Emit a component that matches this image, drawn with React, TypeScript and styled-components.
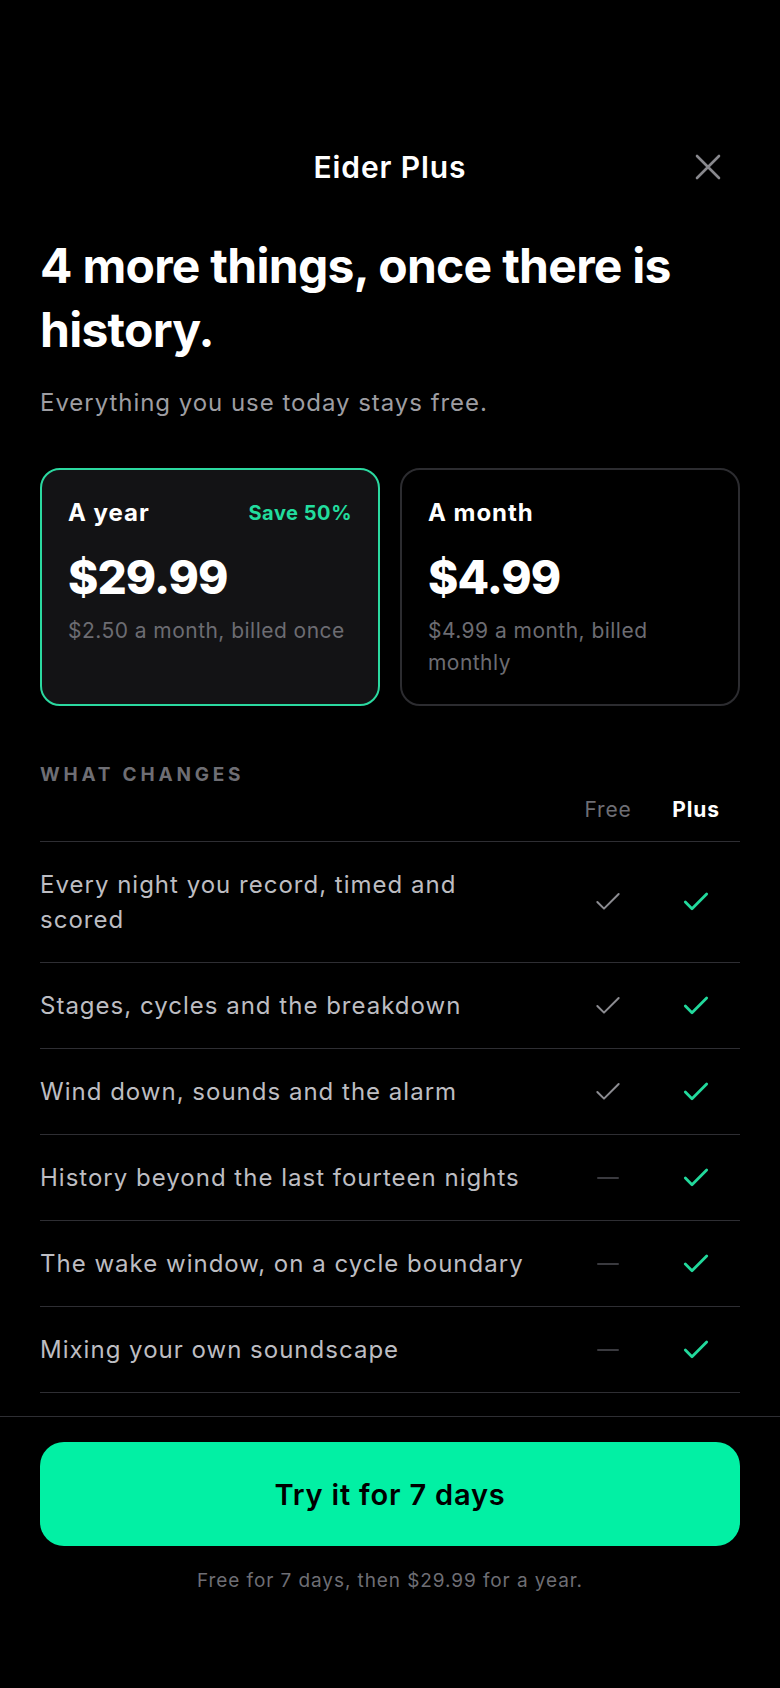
import React from "react";
import styled, { createGlobalStyle } from "styled-components";

const GlobalStyle = createGlobalStyle`
  html, body { margin: 0; padding: 0; background: #000; }
  body { font-family: Inter, "Noto Sans", "Liberation Sans", sans-serif; -webkit-font-smoothing: antialiased; }
  * { box-sizing: border-box; }
`;

const Page = styled.div`
  min-height: 100vh;
  display: flex;
  flex-direction: column;
  background: #000;
  color: #fff;
`;

const Main = styled.main`
  flex: 1;
  padding: 139px 40px 0;
`;

const Header = styled.header`
  display: grid;
  grid-template-columns: 64px 1fr 64px;
  align-items: center;
  height: 56px;
`;

const Title = styled.div`
  grid-column: 2;
  text-align: center;
  font-size: 30px;
  font-weight: 600;
  letter-spacing: 0.03em;
`;

const CloseButton = styled.button`
  grid-column: 3;
  width: 64px;
  height: 56px;
  display: flex;
  align-items: center;
  justify-content: center;
  background: none;
  border: none;
  padding: 0;
  color: #88888d;
  cursor: pointer;
`;

const Heading = styled.h1`
  margin: 39px 0 0;
  font-size: 48px;
  line-height: 64px;
  font-weight: 700;
  letter-spacing: -0.015em;
`;

const Sub = styled.p`
  margin: 24px 0 0;
  font-size: 24px;
  line-height: 34px;
  letter-spacing: 0.04em;
  color: #9d9da2;
`;

const Plans = styled.div`
  display: grid;
  grid-template-columns: 1fr 1fr;
  gap: 20px;
  margin-top: 48px;
`;

const Card = styled.div<{ $selected?: boolean }>`
  border: 2px solid ${(p) => (p.$selected ? "#2bd9a0" : "#2c2c30")};
  background: ${(p) => (p.$selected ? "#131315" : "#000")};
  border-radius: 20px;
  padding: 27px 26px 25px;
`;

const CardTop = styled.div`
  display: flex;
  justify-content: space-between;
  align-items: center;
`;

const PlanName = styled.div`
  font-size: 24px;
  line-height: 32px;
  font-weight: 700;
  letter-spacing: 0.04em;
`;

const Badge = styled.div`
  font-size: 20px;
  line-height: 28px;
  font-weight: 700;
  letter-spacing: 0.027em;
  color: #22dd9e;
`;

const Price = styled.div`
  margin-top: 21px;
  font-size: 46px;
  line-height: 55px;
  font-weight: 800;
  letter-spacing: -0.02em;
`;

const Note = styled.div`
  margin-top: 10px;
  font-size: 21px;
  line-height: 32px;
  letter-spacing: 0.022em;
  color: #6c6c72;
`;

const SectionLabel = styled.div`
  margin-top: 57px;
  font-size: 19px;
  line-height: 24px;
  font-weight: 700;
  letter-spacing: 0.2em;
  color: #6e6e74;
`;

const TableHead = styled.div`
  display: grid;
  grid-template-columns: 1fr 88px 88px;
  padding: 9px 0 17px;
  border-bottom: 1px solid #2e2e33;
`;

const ColHead = styled.div<{ $strong?: boolean }>`
  text-align: center;
  font-size: 21px;
  line-height: 28px;
  letter-spacing: 0.04em;
  font-weight: ${(p) => (p.$strong ? 700 : 400)};
  color: ${(p) => (p.$strong ? "#fff" : "#6e6e74")};
`;

const Row = styled.div`
  display: grid;
  grid-template-columns: 1fr 88px 88px;
  align-items: center;
  padding: 25px 0;
  border-bottom: 1px solid #2e2e33;
`;

const Label = styled.div`
  padding-right: 35px;
  font-size: 24px;
  line-height: 35px;
  letter-spacing: 0.042em;
  color: #bdbdc2;
`;

const Cell = styled.div`
  display: flex;
  justify-content: center;
  align-items: center;
`;

const Dash = styled.span`
  width: 22px;
  height: 2px;
  border-radius: 1px;
  background: #3a3a3f;
`;

const Footer = styled.footer`
  border-top: 1px solid #2e2e33;
  padding: 25px 40px 93px;
`;

const Cta = styled.button`
  width: 100%;
  height: 104px;
  border: none;
  border-radius: 24px;
  background: #02f0a4;
  color: #000;
  font-family: inherit;
  font-size: 29px;
  font-weight: 600;
  letter-spacing: 0.028em;
  cursor: pointer;
`;

const Caption = styled.p`
  margin: 21px 0 0;
  text-align: center;
  font-size: 19px;
  line-height: 28px;
  letter-spacing: 0.048em;
  color: #6e6e74;
`;

const Check = ({ plus }: { plus?: boolean }) => (
  <svg width="32" height="32" viewBox="0 0 24 24" fill="none"
    stroke={plus ? "#22d99c" : "#8c8c91"} strokeWidth={plus ? 2.1 : 1.5}
    strokeLinecap="round" strokeLinejoin="round">
    <polyline points="20 6 9 17 4 12" />
  </svg>
);

const CloseIcon = () => (
  <svg width="26" height="26" viewBox="0 0 26 26" fill="none" stroke="currentColor" strokeWidth="2.6" strokeLinecap="round">
    <path d="M2 2 L24 24 M24 2 L2 24" />
  </svg>
);

const features: { label: string; free: boolean }[] = [
  { label: "Every night you record, timed and scored", free: true },
  { label: "Stages, cycles and the breakdown", free: true },
  { label: "Wind down, sounds and the alarm", free: true },
  { label: "History beyond the last fourteen nights", free: false },
  { label: "The wake window, on a cycle boundary", free: false },
  { label: "Mixing your own soundscape", free: false },
];

export default function App() {
  return (
    <Page>
      <GlobalStyle />
      <Main>
        <Header>
          <Title>Eider Plus</Title>
          <CloseButton aria-label="Close"><CloseIcon /></CloseButton>
        </Header>
        <Heading>4 more things, once there is history.</Heading>
        <Sub>Everything you use today stays free.</Sub>
        <Plans>
          <Card $selected>
            <CardTop>
              <PlanName>A year</PlanName>
              <Badge>Save 50%</Badge>
            </CardTop>
            <Price>$29.99</Price>
            <Note>$2.50 a month, billed once</Note>
          </Card>
          <Card>
            <CardTop>
              <PlanName>A month</PlanName>
            </CardTop>
            <Price>$4.99</Price>
            <Note>$4.99 a month, billed monthly</Note>
          </Card>
        </Plans>
        <SectionLabel>WHAT CHANGES</SectionLabel>
        <TableHead>
          <div />
          <ColHead>Free</ColHead>
          <ColHead $strong>Plus</ColHead>
        </TableHead>
        {features.map((f) => (
          <Row key={f.label}>
            <Label>{f.label}</Label>
            <Cell>{f.free ? <Check /> : <Dash />}</Cell>
            <Cell><Check plus /></Cell>
          </Row>
        ))}
      </Main>
      <Footer>
        <Cta>Try it for 7 days</Cta>
        <Caption>Free for 7 days, then $29.99 for a year.</Caption>
      </Footer>
    </Page>
  );
}
